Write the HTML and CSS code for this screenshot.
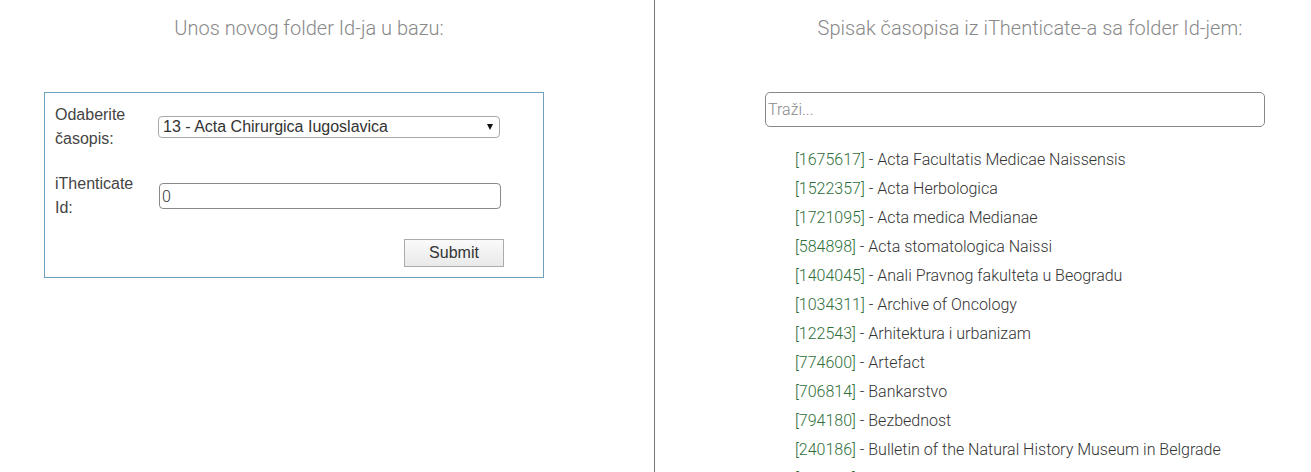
FILE: index.html
```html
<!DOCTYPE html>
<html lang="sr">
<head>
<meta charset="utf-8">
<title>iThenticate folder Id</title>
<link rel="stylesheet" href="styles.css">
</head>
<body>
<div class="page">
  <section class="col col-left">
    <div class="inner">
      <h2 class="title">Unos novog folder Id-ja u bazu:</h2>
      <form class="form-box">
        <div class="row">
          <label class="lbl" for="casopis">Odaberite časopis:</label>
          <span class="select-wrap">
            <select id="casopis" class="select">
              <option>13 - Acta Chirurgica Iugoslavica</option>
            </select>
          </span>
        </div>
        <div class="row">
          <label class="lbl" for="tid">iThenticate Id:</label>
          <input id="tid" class="text-input" type="text" value="0">
        </div>
        <div class="actions">
          <button type="button" class="btn">Submit</button>
        </div>
      </form>
    </div>
  </section>
  <section class="col col-right">
    <div class="inner">
      <h2 class="title">Spisak časopisa iz iThenticate-a sa folder Id-jem:</h2>
      <input class="search" type="text" placeholder="Traži...">
      <ul class="list">
        <li><span class="id">[1675617]</span> - Acta Facultatis Medicae Naissensis</li>
        <li><span class="id">[1522357]</span> - Acta Herbologica</li>
        <li><span class="id">[1721095]</span> - Acta medica Medianae</li>
        <li><span class="id">[584898]</span> - Acta stomatologica Naissi</li>
        <li><span class="id">[1404045]</span> - Anali Pravnog fakulteta u Beogradu</li>
        <li><span class="id">[1034311]</span> - Archive of Oncology</li>
        <li><span class="id">[122543]</span> - Arhitektura i urbanizam</li>
        <li><span class="id">[774600]</span> - Artefact</li>
        <li><span class="id">[706814]</span> - Bankarstvo</li>
        <li><span class="id">[794180]</span> - Bezbednost</li>
        <li><span class="id">[240186]</span> - Bulletin of the Natural History Museum in Belgrade</li>
        <li><span class="id">[918273]</span> - Chemical Industry</li>
      </ul>
    </div>
  </section>
</div>
</body>
</html>
```

FILE: styles.css
```css
html, body {
  margin: 0;
  padding: 0;
  background: #fff;
  overflow: hidden;
}
body {
  font-family: Roboto, "Liberation Sans", sans-serif;
  color: #333;
}
.page {
  display: flex;
  height: 472px;
}
.col {
  box-sizing: border-box;
}
.col-left {
  width: 655px;
  border-right: 1px solid #777;
  padding-left: 44px;
}
.col-right {
  flex: 1;
  padding-left: 110px;
}
.inner {
  width: 500px;
}
.title {
  margin: 16px 0 0 0;
  padding-left: 30px;
  text-align: center;
  font-family: Roboto, sans-serif;
  font-weight: 300;
  font-size: 20px;
  line-height: 24px;
  color: #888;
}
.form-box {
  box-sizing: border-box;
  margin-top: 52px;
  width: 500px;
  border: 1px solid #6f9fbf;
  padding: 10px 0 10px 10px;
  font-family: "Liberation Sans", Arial, sans-serif;
  font-size: 16px;
}
.row {
  display: flex;
  align-items: center;
  min-height: 48px;
}
.row + .row {
  margin-top: 21px;
}
.lbl {
  box-sizing: border-box;
  width: 103px;
  padding-right: 14px;
  line-height: 24px;
  color: #444;
}
.select-wrap {
  position: relative;
  display: block;
}
.select-wrap::after {
  content: "";
  position: absolute;
  right: 7px;
  top: 8px;
  border-left: 3.5px solid transparent;
  border-right: 3.5px solid transparent;
  border-top: 6px solid #111;
  pointer-events: none;
}
.select {
  -webkit-appearance: none;
  appearance: none;
  box-sizing: border-box;
  width: 342px;
  height: 22px;
  margin: 0;
  padding: 0 0 0 4px;
  border: 1px solid #a9a9a9;
  border-radius: 4px;
  background: #fff;
  font-family: "Liberation Sans", Arial, sans-serif;
  font-size: 16px;
  line-height: 20px;
  color: #333;
}
.text-input {
  box-sizing: border-box;
  width: 342px;
  height: 26px;
  margin: 0 0 0 1px;
  padding: 0 2px;
  border: 1px solid #8a8a8a;
  border-radius: 4px;
  font-family: Roboto, sans-serif;
  font-weight: 300;
  font-size: 16px;
  color: #333;
  outline: none;
}
.actions {
  display: flex;
  justify-content: flex-end;
  padding-right: 39px;
  margin-top: 19px;
}
.btn {
  box-sizing: border-box;
  width: 100px;
  height: 28px;
  margin: 0;
  padding: 0;
  border: 1px solid #ababab;
  border-radius: 0;
  background: linear-gradient(#fafafa, #e9e9e9);
  font-family: "Liberation Sans", Arial, sans-serif;
  font-size: 16px;
  color: #333;
}
.search {
  box-sizing: border-box;
  display: block;
  margin-top: 52px;
  width: 500px;
  height: 35px;
  padding: 0 2px;
  border: 1px solid #888;
  border-radius: 5px;
  font-family: Roboto, sans-serif;
  font-weight: 300;
  font-size: 16px;
  color: #333;
  outline: none;
}
.search::placeholder {
  color: #888;
}
.list {
  list-style: none;
  margin: 18px 0 0 0;
  padding: 0 0 0 30px;
  font-family: Roboto, sans-serif;
  font-weight: 300;
  font-size: 16px;
  line-height: 29px;
  color: #333;
  white-space: nowrap;
}
.id {
  color: #2f6f3a;
}
```
